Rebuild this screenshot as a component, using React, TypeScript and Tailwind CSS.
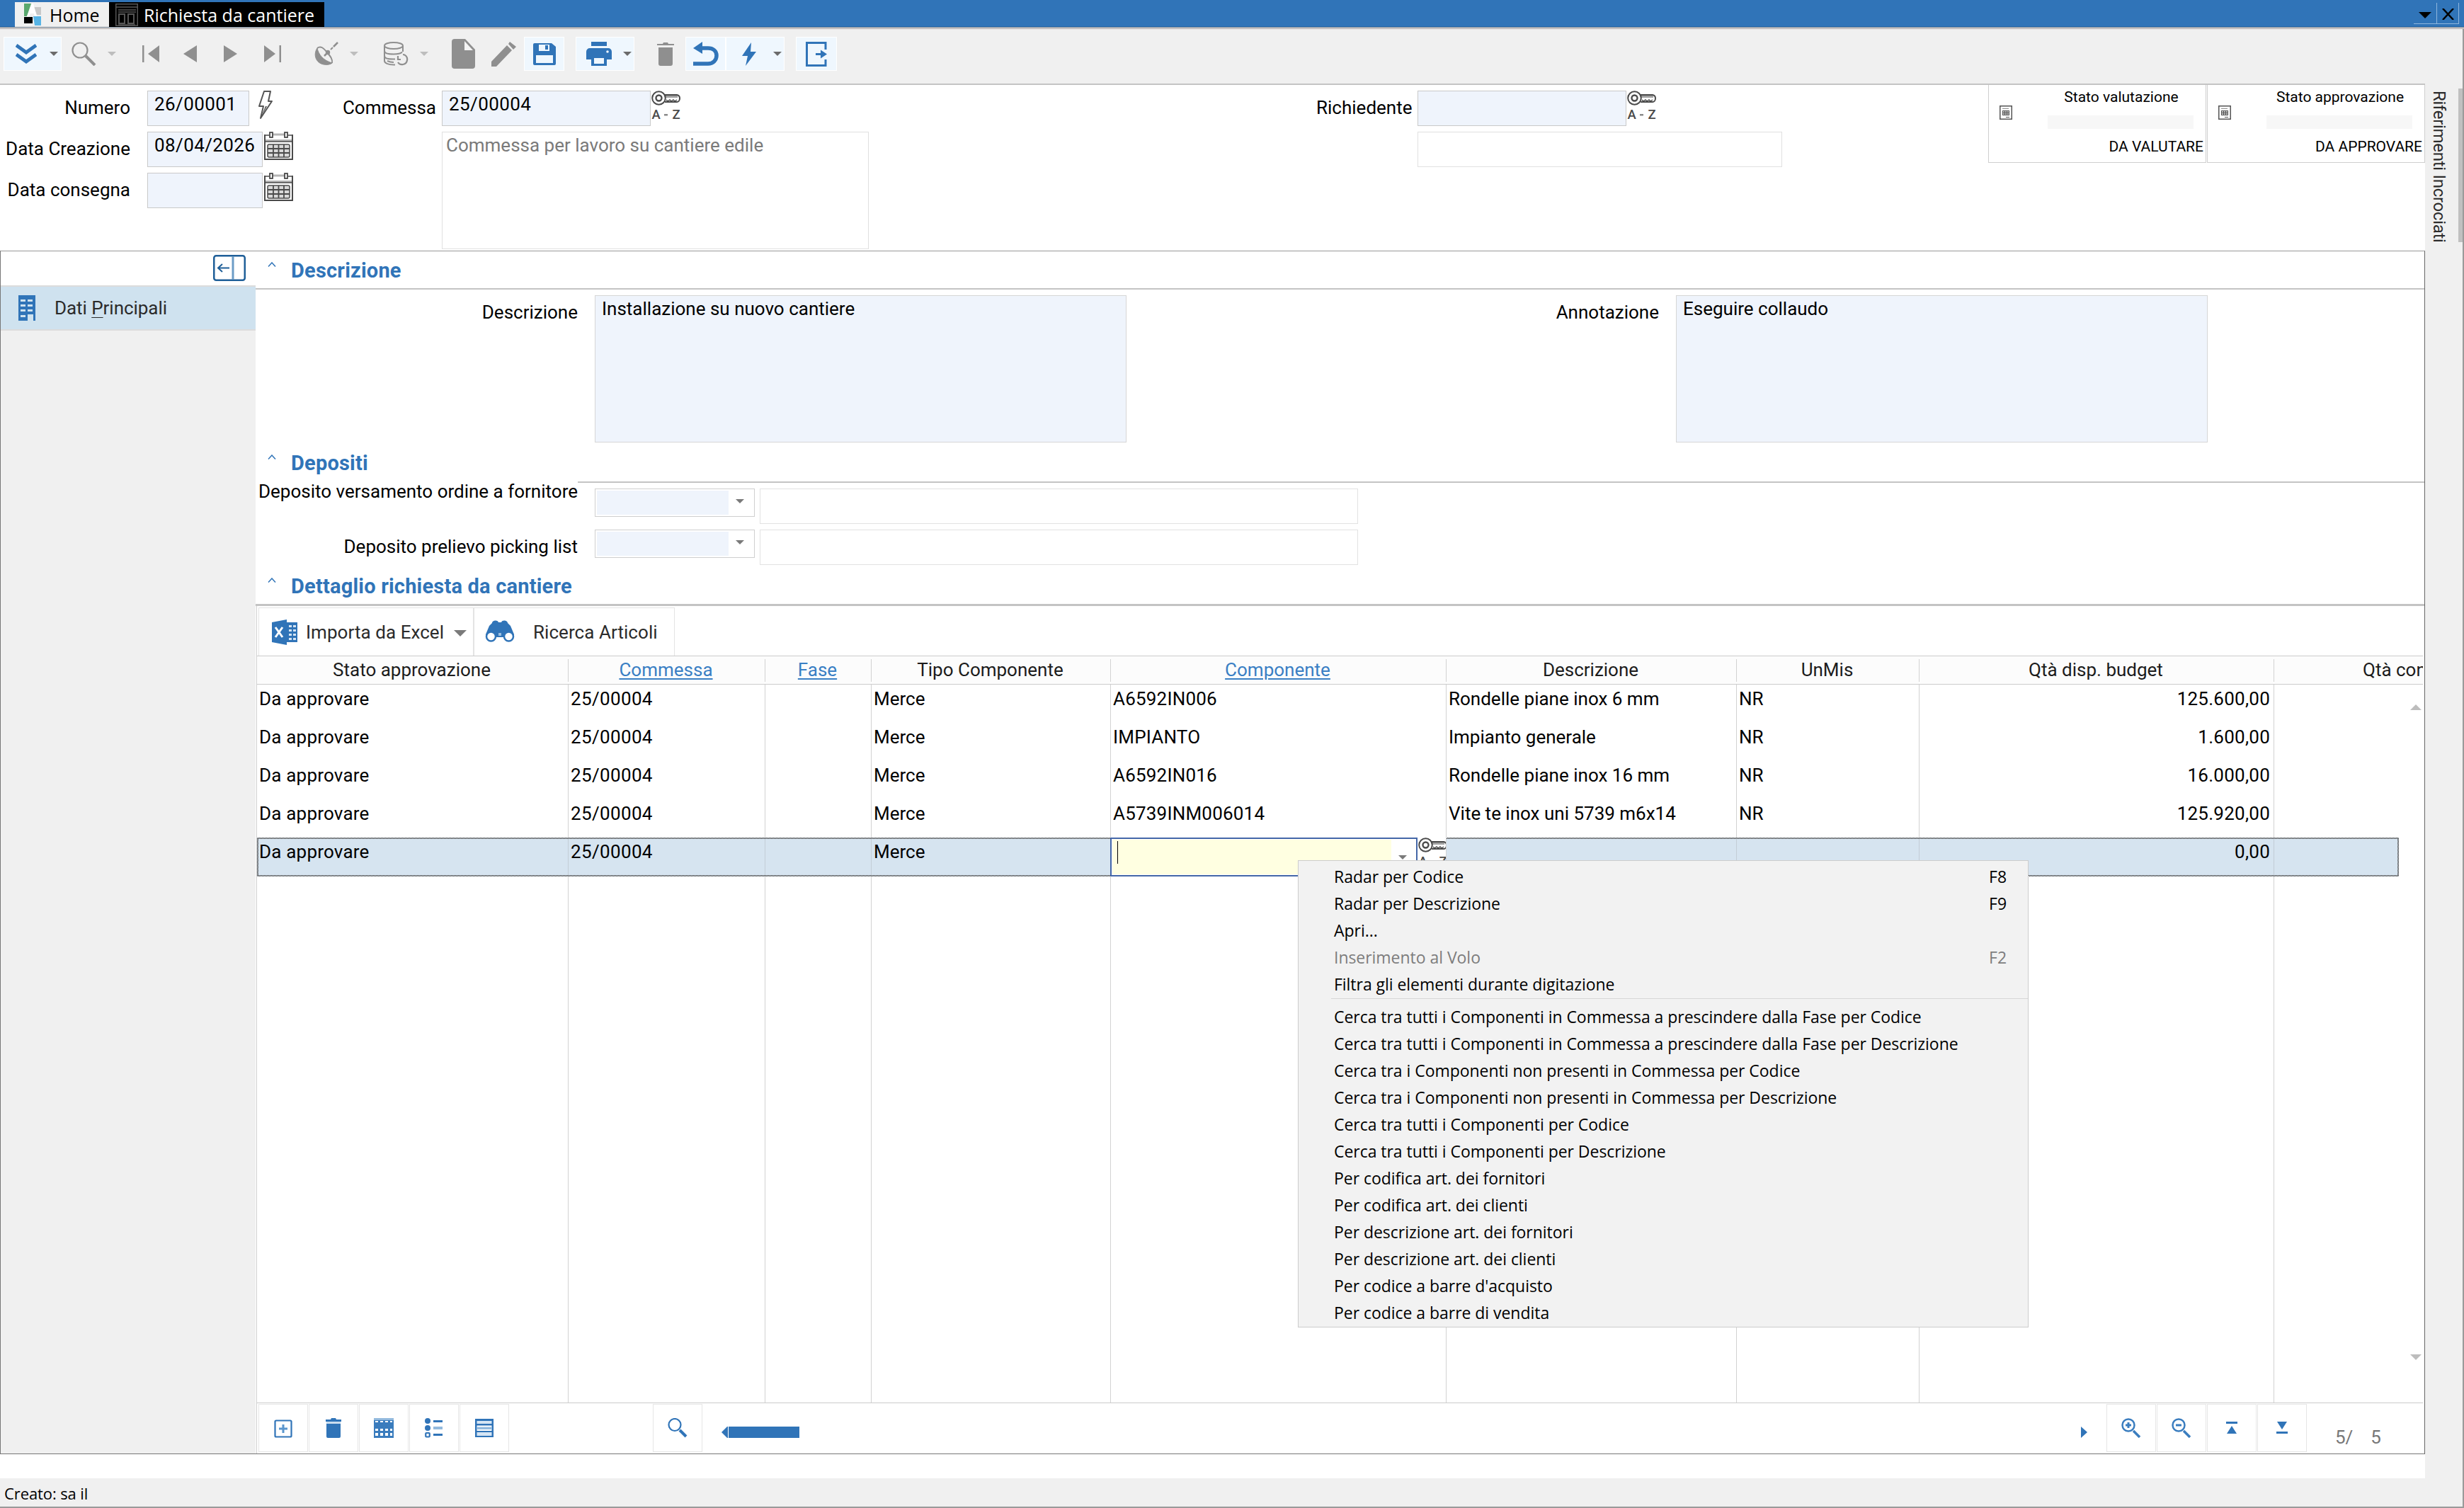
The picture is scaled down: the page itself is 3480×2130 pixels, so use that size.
import type { ReactNode } from "react";
import clsx from "clsx";

interface Column {
  label: string;
  link?: boolean;
}

interface Row {
  commessa: string;
  tipo: string;
  componente: string;
  descrizione: string;
  um: string;
  qta: string;
}

interface MenuItem {
  label: string;
  shortcut?: string;
  disabled?: boolean;
}

const columns: Column[] = [
  { label: "Stato approvazione" },
  { label: "Commessa", link: true },
  { label: "Fase", link: true },
  { label: "Tipo Componente" },
  { label: "Componente", link: true },
  { label: "Descrizione" },
  { label: "UnMis" },
  { label: "Qtà disp. budget" },
];

const rows: Row[] = [
  { commessa: "25/00004", tipo: "Merce", componente: "A6592IN006", descrizione: "Rondelle piane inox 6 mm", um: "NR", qta: "125.600,00" },
  { commessa: "25/00004", tipo: "Merce", componente: "IMPIANTO", descrizione: "Impianto generale", um: "NR", qta: "1.600,00" },
  { commessa: "25/00004", tipo: "Merce", componente: "A6592IN016", descrizione: "Rondelle piane inox 16 mm", um: "NR", qta: "16.000,00" },
  { commessa: "25/00004", tipo: "Merce", componente: "A5739INM006014", descrizione: "Vite te inox uni 5739 m6x14", um: "NR", qta: "125.920,00" },
];

const menuTop: MenuItem[] = [
  { label: "Radar per Codice", shortcut: "F8" },
  { label: "Radar per Descrizione", shortcut: "F9" },
  { label: "Apri..." },
  { label: "Inserimento al Volo", shortcut: "F2", disabled: true },
  { label: "Filtra gli elementi durante digitazione" },
];

const menuBottom: MenuItem[] = [
  { label: "Cerca tra tutti i Componenti in Commessa a prescindere dalla Fase per Codice" },
  { label: "Cerca tra tutti i Componenti in Commessa a prescindere dalla Fase per Descrizione" },
  { label: "Cerca tra i Componenti non presenti in Commessa per Codice" },
  { label: "Cerca tra i Componenti non presenti in Commessa per Descrizione" },
  { label: "Cerca tra tutti i Componenti per Codice" },
  { label: "Cerca tra tutti i Componenti per Descrizione" },
  { label: "Per codifica art. dei fornitori" },
  { label: "Per codifica art. dei clienti" },
  { label: "Per descrizione art. dei fornitori" },
  { label: "Per descrizione art. dei clienti" },
  { label: "Per codice a barre d'acquisto" },
  { label: "Per codice a barre di vendita" },
];

const gridCols = "grid grid-cols-[440px_278px_150px_338px_474px_410px_258px_501px_1fr]";

/* ---------- Icons ---------- */

function Caret({ className }: { className?: string }) {
  return (
    <svg viewBox="0 0 12 6" className={clsx("w-3 h-1.5 shrink-0 fill-current", className)}>
      <path d="M0 0h12L6 6z" />
    </svg>
  );
}

function KeyIcon({ className }: { className?: string }) {
  return (
    <svg viewBox="0 0 42 41" className={clsx("w-[42px] h-[41px] shrink-0 overflow-visible", className)} fill="none" stroke="#4a4a4a" strokeWidth="2">
      <path d="M18 6h18a5 5 0 0 1 4 5c0 3-2 5-4 5H19" />
      <path d="M20 7h17v3H20z" fill="#a0a0a0" stroke="none" />
      <path d="M21 13l2 2 3-2 2 2 3-2 2 2 3-2" strokeWidth="1.5" />
      <circle cx="10.5" cy="10.5" r="9.3" fill="#fff" />
      <circle cx="10.5" cy="10.5" r="4" strokeWidth="2.4" />
      <text x="0.5" y="40" fontSize="18.5" fontFamily="Roboto" fontWeight="500" fill="#4a4a4a" stroke="none">A</text>
      <rect x="18" y="33" width="5" height="2.5" fill="#8a8a8a" stroke="none" />
      <text x="29.5" y="40" fontSize="18.5" fontFamily="Roboto" fontWeight="500" fill="#4a4a4a" stroke="none">Z</text>
    </svg>
  );
}

function CalendarIcon() {
  return (
    <svg viewBox="0 0 41 41" className="w-[41px] h-[41px] shrink-0 ml-0.5" fill="none" stroke="#4a4a4a">
      <path d="M1 4v35h39V4" strokeWidth="2" />
      <path d="M2 11h37v3H2z" fill="#b5b5b5" stroke="none" />
      <path d="M12 4h17" stroke="#b5b5b5" strokeWidth="3" />
      <path d="M1 5h6M34 5h6M1 14h39" strokeWidth="1.5" />
      <rect x="8" y="1" width="4" height="7" strokeWidth="1.8" />
      <rect x="29" y="1" width="4" height="7" strokeWidth="1.8" />
      <rect x="5" y="18" width="31" height="18" rx="2" fill="#d8d8d8" strokeWidth="1.5" />
      <path d="M13 18v18M20.5 18v18M28 18v18M5 24h31M5 30h31" strokeWidth="1.8" />
    </svg>
  );
}

function MiniDocIcon() {
  return (
    <svg viewBox="0 0 18 20" className="w-[18px] h-5 shrink-0" fill="none" stroke="#555">
      <rect x="0.75" y="0.75" width="16.5" height="18.5" strokeWidth="1.5" />
      <path d="M4 4.5h9" stroke="#888" />
      <rect x="4.5" y="7.5" width="9" height="6" fill="#c4c4c4" />
      <path d="M4.500 10.500h9M7.500 7.500v6M10.500 7.500v6M9 16.500h5" />
    </svg>
  );
}

function ZoomIcon({ sign }: { sign: "+" | "-" }) {
  return (
    <svg viewBox="0 0 28 28" className="w-7 h-7 mt-[19px]" fill="none" stroke="#3a7dbf">
      <circle cx="10" cy="10" r="8.5" strokeWidth="2.5" />
      <path d="M17 18l9 9" strokeWidth="3.5" />
      <path d={sign === "+" ? "M6 10h8M10 6v8" : "M6 10h8"} strokeWidth="3" />
    </svg>
  );
}

/* ---------- Small building blocks ---------- */

function ToolButton({ className, children }: { className?: string; children: ReactNode }) {
  return (
    <div className={clsx("h-[48px] flex items-center shrink-0 bg-[#eff7fe] border border-white text-[#6b6b6b]", className)}>
      {children}
    </div>
  );
}

function Label({ className, children }: { className?: string; children: ReactNode }) {
  return <div className={clsx("text-right pt-[9px] whitespace-nowrap shrink-0", className)}>{children}</div>;
}

function Field({ className, children }: { className?: string; children?: ReactNode }) {
  return (
    <div className={clsx("h-[50px] pt-[3px] border border-[#c9c9c9] bg-[#eff4fc] tracking-[0.4px] whitespace-nowrap shrink-0", className)}>
      {children}
    </div>
  );
}

function Combo() {
  return (
    <div className="w-[226px] h-10 ml-6 p-[2px] flex items-center border border-[#cfcfcf] bg-white shrink-0">
      <div className="w-[186px] h-full bg-[#eff4fc]" />
      <Caret className="ml-[10px] -mt-1 text-[#7a7a7a]" />
    </div>
  );
}

function SectionHeader({ title, className }: { title: string; className?: string }) {
  return (
    <div className={clsx("flex items-start border-[#c4c4c4] pl-[17px] shrink-0", className)}>
      <svg viewBox="0 0 12 7" className="w-3 h-[7px] mt-[15px]" fill="none" stroke="#3074b8" strokeWidth="1.5">
        <path d="M1 6.5L6 1l5 5.5" />
      </svg>
      <h2 className="ml-[21px] mt-[11px] text-[29px] leading-8 tracking-[0.2px] font-bold text-[#3074b8]">{title}</h2>
    </div>
  );
}

function StatusBox({ title, value }: { title: string; value: string }) {
  return (
    <div className="w-[308px] h-[110px] flex border border-t-0 border-[#cfcfcf] text-[21px] leading-6 shrink-0">
      <div className="pl-[15px] pt-[29px]">
        <MiniDocIcon />
      </div>
      <div className="flex-1 flex flex-col">
        <div className="pl-[35px] pt-[5px] text-center">{title}</div>
        <div className="ml-[50px] mt-[14px] w-[206px] h-[19px] bg-[#f7f7f7]" />
        <div className="mt-[12px] pr-[3px] text-right leading-[26px]">{value}</div>
      </div>
    </div>
  );
}

function GridButton({ className, children }: { className?: string; children: ReactNode }) {
  return (
    <div className={clsx("w-[70px] h-[68px] mr-px flex justify-center items-start border border-[#e6e6e6] bg-white shrink-0", className)}>
      {children}
    </div>
  );
}

function MenuRow({ item }: { item: MenuItem }) {
  return (
    <div className={clsx("h-[38px] flex items-center justify-between pl-[50px] pr-[30px] whitespace-nowrap", item.disabled ? "text-[#7d7d7d]" : "text-black")}>
      <span>{item.label}</span>
      <span>{item.shortcut}</span>
    </div>
  );
}

/* ---------- Page sections ---------- */

function TitleBar() {
  return (
    <div className="h-[38px] flex items-end bg-[#3074b8] pl-[21px] font-['Open_Sans',sans-serif] text-[25px] leading-9 shrink-0">
      <div className="w-[133px] h-[35px] flex bg-[#f0f0f0] text-black">
        <svg viewBox="0 0 24 32" className="w-6 h-8 ml-[13px] mt-[2px]">
          <path d="M0 0h10L4 18H0z" fill="#5aa86e" />
          <path d="M14 5h10v11h-6z" fill="#c8c8c8" />
          <path d="M11 0h2l5 18h-3l-1-4H9l-2 4H4z" fill="#fff" />
          <path d="M0 19h12v9H0z" fill="#000" />
          <path d="M13 18h11v13H15z" fill="#58b4e5" />
        </svg>
        <span className="ml-3">Home</span>
      </div>
      <div className="w-[304px] h-[36px] -mb-px flex bg-black text-white">
        <svg viewBox="0 0 32 32" className="w-8 h-8 ml-[9px] mt-[2px]" fill="none" stroke="#555" strokeWidth="1.5">
          <rect x="0.75" y="0.75" width="30.5" height="30.5" />
          <path d="M1 5h30M4 9h25M4 12h25" />
          <path d="M5 15h8v13H5zM18 15h8v13h-8z" strokeWidth="2" />
          <path d="M4 30h24" />
        </svg>
        <span className="ml-2">Richiesta da cantiere</span>
      </div>
      <div className="ml-auto mb-1 mr-[7px] h-[30px] flex text-black">
        <div className="w-8 border-b border-[#8fb6dd] flex justify-center">
          <svg viewBox="0 0 18 9" className="w-[18px] h-[9px] mt-[13px]">
            <path d="M0 0h18L9 9z" />
          </svg>
        </div>
        <div className="w-8 border-b border-x border-[#8fb6dd] flex justify-center">
          <svg viewBox="0 0 19 16" className="w-[19px] h-4 mt-2" fill="none" stroke="#000" strokeWidth="2.5">
            <path d="M2 0l15 16M17 0L2 16" />
          </svg>
        </div>
      </div>
    </div>
  );
}

function Toolbar() {
  return (
    <div className="h-[77px] pl-[5px] pt-[11px] flex items-start bg-[#f0f0f0] shrink-0">
      <div className="h-[48px] flex items-center text-[#bdbdbd]">
        <ToolButton className="w-[82px]">
          <svg viewBox="0 0 30 29" className="w-[30px] h-[29px] ml-4" fill="none" stroke="#3074b8" strokeWidth="5">
            <path d="M1 2l14 10L29 2M1 15l14 10 14-10" />
          </svg>
          <Caret className="ml-[18px]" />
        </ToolButton>
        <svg viewBox="0 0 35 34" className="w-[35px] h-[34px] ml-[14px]" fill="none" stroke="#8f8f8f">
          <circle cx="12" cy="12" r="10.5" strokeWidth="2.2" />
          <path d="M20 20l13 13" strokeWidth="4" />
        </svg>
        <Caret className="ml-4" />
        <svg viewBox="0 0 24 24" className="w-6 h-6 ml-[37px] fill-[#8f8f8f]">
          <path d="M0 0h2.500v24H0zM24 0v24L8 12z" />
        </svg>
        <svg viewBox="0 0 19 24" className="w-[19px] h-6 ml-[34px] fill-[#8f8f8f]">
          <path d="M19 0v24L0 12z" />
        </svg>
        <svg viewBox="0 0 19 24" className="w-[19px] h-6 ml-[38px] fill-[#8f8f8f]">
          <path d="M0 0v24l19-12z" />
        </svg>
        <svg viewBox="0 0 24 24" className="w-6 h-6 ml-[38px] fill-[#8f8f8f]">
          <path d="M21.500 0H24v24h-2.500zM0 0v24l16-12z" />
        </svg>
        {/* Satellite dish */}
        <svg viewBox="0 0 34 34" className="w-[34px] h-[34px] ml-[47px]" fill="none" stroke="#8f8f8f">
          <path d="M4 9C-2 18 2 30 13 32c5 1 10 0 12-2C12 26 6 18 4 9z" fill="#8f8f8f" />
          <path d="M4 9c5-4 9 0 14 6s8 10 7 15" strokeWidth="2" />
          <path d="M14 20l5-5M27 7l6-6" strokeWidth="2.5" />
          <circle cx="19" cy="15" r="3.2" fill="#8f8f8f" stroke="none" />
          <path d="M23 11l3-3" strokeWidth="2" />
        </svg>
        <Caret className="ml-4" />
        {/* Database refresh */}
        <svg viewBox="0 0 35 34" className="w-[35px] h-[34px] ml-9" fill="none" stroke="#8f8f8f" strokeWidth="2">
          <ellipse cx="14" cy="5.5" rx="13" ry="4.5" />
          <path d="M1 6v21c0 3 5 5.500 13 5.500h2M27 6v8M1 13c0 3 6 4.500 13 4.500 5 0 10-1 12-3M1 20c0 3 5 4.500 12 4.500h3M5 27c3 1.500 6 2 9 2" />
          <path d="M20 20v5h4M20 29c3 5 12 4 13-3 1-5-3-8-6-8" strokeWidth="2.2" />
        </svg>
        <Caret className="ml-4" />
        <svg viewBox="0 0 33 42" className="w-[33px] h-[42px] ml-[33px]">
          <path d="M4 0h15l14 15v23a4 4 0 0 1-4 4H4a4 4 0 0 1-4-4V4a4 4 0 0 1 4-4z" fill="#8f8f8f" />
          <path d="M18 3l12 13H18z" fill="#f4f4f4" />
        </svg>
        <svg viewBox="0 0 35 35" className="w-[35px] h-[35px] ml-[23px] fill-[#8f8f8f]">
          <path d="M0 28L22 5l7 7L7 35H0zM24 3l2-3 9 7-4 4z" />
        </svg>
        <ToolButton className="w-[57px] ml-[11px] justify-center">
          <svg viewBox="0 0 32 31" className="w-8 h-[31px]">
            <path d="M2 0h24l6 5v24a2 2 0 0 1-2 2H2a2 2 0 0 1-2-2V2a2 2 0 0 1 2-2z" fill="#3074b8" />
            <path d="M8 2h15v9H8zM4 17h24v11H4z" fill="#eff7fe" />
            <path d="M17 3h4v6h-4z" fill="#3074b8" />
          </svg>
        </ToolButton>
        <ToolButton className="w-[83px] ml-4">
          <svg viewBox="0 0 36 34" className="w-9 h-[34px] ml-[14px]">
            <path d="M7 0h22v6H7zM5 9h26a5 5 0 0 1 5 5v11h-7v9H7v-9H0V14a5 5 0 0 1 5-5z" fill="#3074b8" />
            <path d="M11 23h14v8H11z" fill="#eff7fe" />
            <circle cx="30" cy="14" r="1.8" fill="#eff7fe" />
          </svg>
          <Caret className="ml-4" />
        </ToolButton>
        <svg viewBox="0 0 24 33" className="w-6 h-[33px] ml-[32px] fill-[#8f8f8f]">
          <path d="M0 2h8l1-2h6l1 2h8v2H0zM2 7h20v23a3 3 0 0 1-3 3H5a3 3 0 0 1-3-3z" />
        </svg>
        <ToolButton className="w-[57px] ml-4 justify-center">
          <svg viewBox="0 0 36 34" className="w-9 h-[34px]" fill="none" stroke="#3074b8">
            <path d="M9 9h12c7 0 12 4 12 10.500S28 31 21 31H0" strokeWidth="5.5" />
            <path d="M13 0v17L0 9z" fill="#3074b8" stroke="none" />
          </svg>
        </ToolButton>
        <ToolButton className="w-[83px]">
          <svg viewBox="0 0 20 33" className="w-5 h-[33px] ml-[22px] fill-[#3074b8]">
            <path d="M13 0L0 19h8L5 33l15-20h-8z" />
          </svg>
          <Caret className="ml-6" />
        </ToolButton>
        <ToolButton className="w-[58px] ml-4 justify-center">
          <svg viewBox="0 0 31 35" className="w-[31px] h-[35px]" fill="none" stroke="#3074b8" strokeWidth="3">
            <path d="M28 11V1.500H1.500v32H28V25" />
            <path d="M14 17.500h9" />
            <path d="M21 11.500l9 6-9 6z" fill="#3074b8" stroke="none" />
          </svg>
        </ToolButton>
      </div>
    </div>
  );
}

function FormHeader() {
  return (
    <div className="h-[236px] flex border-t-2 border-[#c4c4c4] bg-white shrink-0">
      <div className="w-[414px] pt-2 flex flex-col gap-2">
        <div className="flex">
          <Label className="w-[184px]">Numero</Label>
          <Field className="w-[144px] ml-6 pl-[9px]">26/00001</Field>
          <svg viewBox="0 0 20 41" className="w-5 h-[41px] ml-[13px]" fill="#fff" stroke="#555" strokeWidth="2" strokeLinejoin="round">
            <path d="M8 1h9l-3 14h5L3 39l4-17H1z" />
            <path d="M10 22l-7 17 9-17z" fill="#555" stroke="none" />
          </svg>
        </div>
        <div className="flex">
          <Label className="w-[184px]">Data Creazione</Label>
          <Field className="w-[163px] ml-6 pl-[9px]">08/04/2026</Field>
          <CalendarIcon />
        </div>
        <div className="flex">
          <Label className="w-[184px]">Data consegna</Label>
          <Field className="w-[163px] ml-6" />
          <CalendarIcon />
        </div>
      </div>

      <div className="w-[1445px] pt-2 flex flex-col gap-2">
        <div className="flex">
          <Label className="w-[202px]">Commessa</Label>
          <Field className="w-[295px] ml-2 pl-[9px]">25/00004</Field>
          <KeyIcon className="ml-px" />
        </div>
        <div className="w-[603px] h-[166px] ml-[210px] pl-[5px] pt-[3px] border border-[#e0e0e0] text-[#7a7a7a]">
          Commessa per lavoro su cantiere edile
        </div>
      </div>

      <div className="pt-2 flex flex-col gap-2">
        <div className="flex">
          <Label className="w-[135px]">Richiedente</Label>
          <Field className="w-[295px] ml-2" />
          <KeyIcon className="ml-px" />
        </div>
        <div className="w-[515px] h-[50px] ml-[143px] border border-[#e0e0e0]" />
      </div>

      <div className="ml-auto flex gap-px">
        <StatusBox title="Stato valutazione" value="DA VALUTARE" />
        <StatusBox title="Stato approvazione" value="DA APPROVARE" />
      </div>
    </div>
  );
}

function Sidebar() {
  return (
    <div className="w-[360px] bg-[#f0f0f0] flex flex-col shrink-0">
      <div className="h-[48px] bg-white flex justify-end items-start pr-[14px] pt-[5px]">
        <svg viewBox="0 0 46 37" className="w-[46px] h-[37px]" fill="none" stroke="#1f5f98" strokeWidth="2.5">
          <rect x="1.25" y="1.25" width="43.5" height="34.5" rx="3" />
          <path d="M28 2v33" stroke="#6c9cc6" strokeWidth="3" />
          <path d="M7 18.500h16M13 13l-6 5.500 6 5.500" strokeWidth="2" />
        </svg>
      </div>
      <div className="h-[64px] flex items-center bg-[#cfe2ef] border-y-2 border-[#dcdcdc]">
        <svg viewBox="0 0 24 36" className="w-6 h-9 ml-[25px]">
          <path d="M0 0h24v36h-3v-9h-8v9H0z" fill="#3074b8" />
          <path d="M3 6h7v3H3zM13 6h7v3h-7zM3 13h7v3H3zM13 13h7v3h-7zM3 20h7v3H3zM13 20h7v3h-7zM3 28h7v3H3z" fill="#cfe2ef" />
        </svg>
        <span className="ml-[27px] text-[#2b2b2b] tracking-[-0.05px]">
          Dati <span className="underline decoration-1 underline-offset-4">P</span>rincipali
        </span>
      </div>
    </div>
  );
}

function DetailGrid() {
  const cell = "border-r border-[#d2d2d2] pl-[3px] whitespace-nowrap overflow-hidden";

  return (
    <div className="flex-1 flex flex-col ml-px border-l border-[#cfcfcf] min-h-0">
      {/* Grid toolbar */}
      <div className="h-[70px] flex items-start pt-0.5 pl-0.5 text-[#2b2b2b] shrink-0">
        <div className="w-[304px] h-[68px] flex items-center border border-b-0 border-[#e4e4e4]">
          <svg viewBox="0 0 36 36" className="w-9 h-9 ml-[18px]">
            <path d="M21 4h15v28H21z" fill="#3074b8" />
            <path d="M24 8h4v3h-4zM30 8h4v3h-4zM24 14h4v3h-4zM30 14h4v3h-4zM24 20h4v3h-4zM30 20h4v3h-4zM24 26h4v3h-4zM30 26h4v3h-4z" fill="#d5e5f4" />
            <path d="M0 4l21-4v36L0 32z" fill="#3074b8" />
            <path d="M5 11l10 14M15 11L5 25" stroke="#fff" strokeWidth="3" />
          </svg>
          <span className="ml-3 mt-px tracking-[0.05px]">Importa da Excel</span>
          <svg viewBox="0 0 18 9" className="w-[18px] h-[9px] ml-[14px] mt-1 fill-[#7a7a7a]">
            <path d="M0 0h18L9 9z" />
          </svg>
        </div>
        <div className="w-[284px] h-[68px] flex items-center border border-b-0 border-[#e4e4e4]">
          <svg viewBox="0 0 42 31" className="w-[42px] h-[31px] ml-[15px] -mt-0.5">
            <path d="M10 4c0-4 8-5 9-1h4c1-4 9-3 9 1l4 4 5 12v4H1v-4L6 8z" fill="#3074b8" />
            <circle cx="8.5" cy="23" r="6.5" fill="#fff" stroke="#3074b8" strokeWidth="2.5" />
            <circle cx="33.5" cy="23" r="6.5" fill="#fff" stroke="#3074b8" strokeWidth="2.5" />
            <path d="M17 24h8v7h-8z" fill="#fff" />
            <path d="M19 18h4v4h-4z" fill="#9cc0e2" />
          </svg>
          <span className="ml-[26px] mt-px tracking-[0.05px]">Ricerca Articoli</span>
        </div>
      </div>

      {/* Column headers */}
      <div className={clsx(gridCols, "h-[41px] border-y border-[#cccccc] bg-[#fcfcfc] mr-0.5 text-[#1c1c1c] shrink-0")}>
        {columns.map((col) => (
          <div key={col.label} className="h-8 mt-1 pr-0.5 border-r border-[#d2d2d2] text-center">
            <span className={clsx(col.link && "text-[#3a7fc4] underline decoration-2 underline-offset-[3px]")}>{col.label}</span>
          </div>
        ))}
        <div className="h-8 mt-1 pl-[125px] whitespace-nowrap overflow-hidden">Qtà con</div>
      </div>

      {/* Rows, with the scroll arrows over the right edge */}
      <div className="relative flex-1 flex flex-col mr-0.5 min-h-0">
        {rows.map((row) => (
          <div key={row.componente} className={clsx(gridCols, "h-[54px] leading-10 shrink-0")}>
            <div className={clsx(cell, "tracking-[0.2px]")}>Da approvare</div>
            <div className={clsx(cell, "tracking-[0.35px]")}>{row.commessa}</div>
            <div className={cell} />
            <div className={cell}>{row.tipo}</div>
            <div className={clsx(cell, "tracking-[0.2px]")}>{row.componente}</div>
            <div className={cell}>{row.descrizione}</div>
            <div className={cell}>{row.um}</div>
            <div className={clsx(cell, "text-right pr-[5px] tracking-[0.25px]")}>{row.qta}</div>
          </div>
        ))}

        <div className="w-[3025px] h-[55px] p-[2px] bg-[repeating-conic-gradient(#3c3c3c_0_25%,#c8d0d8_0_50%)] bg-[length:2px_2px] shrink-0">
          <div className="h-full grid grid-cols-[438px_278px_150px_338px_474px_410px_258px_501px_1fr] leading-9 bg-[#d6e4f0]">
            <div className="border-r border-[#c3cdd6] pl-px tracking-[0.2px]">Da approvare</div>
            <div className="border-r border-[#c3cdd6] pl-[3px] tracking-[0.35px]">25/00004</div>
            <div className="border-r border-[#c3cdd6]" />
            <div className="pl-[3px]">Merce</div>
            <div className="-my-0.5 -ml-px flex bg-white border-r border-[#d2d2d2]">
              <div className="w-[434px] flex border-2 border-[#4467a8] p-px">
                <div className="w-[394px] pl-[7px] pt-0.5 bg-[#ffffe1]">
                  <div className="w-px h-8 bg-black" />
                </div>
                <Caret className="ml-[10px] mt-[22px] text-[#7a7a7a]" />
              </div>
              <div className="flex-1 overflow-hidden">
                <KeyIcon className="ml-px" />
              </div>
            </div>
            <div className="border-r border-[#c3cdd6]" />
            <div className="border-r border-[#c3cdd6]" />
            <div className="border-r border-[#c3cdd6] pr-[5px] text-right tracking-[0.25px]">0,00</div>
          </div>
        </div>

        <div className={clsx(gridCols, "flex-1")}>
          {columns.map((col) => (
            <div key={col.label} className="border-r border-[#d2d2d2]" />
          ))}
        </div>

        <svg viewBox="0 0 16 8" className="absolute right-0.5 top-[28px] w-4 h-2 fill-[#bdbdbd]">
          <path d="M0 8h16L8 0z" />
        </svg>
        <svg viewBox="0 0 16 8" className="absolute right-0.5 bottom-[60px] w-4 h-2 fill-[#bdbdbd]">
          <path d="M0 0h16L8 8z" />
        </svg>
      </div>

      {/* Footer bar */}
      <div className="h-[72px] flex items-start border-t border-[#cccccc] pt-px pl-0.5 mr-0.5 shrink-0">
        <GridButton>
          <svg viewBox="0 0 26 26" className="w-[26px] h-[26px] mt-[21px]" fill="none" stroke="#3074b8">
            <rect x="1.5" y="1.5" width="23" height="23" rx="1.5" strokeWidth="2.2" />
            <path d="M7 13h12M13 7v12" stroke="#5b96cd" strokeWidth="3" />
          </svg>
        </GridButton>
        <GridButton>
          <svg viewBox="0 0 22 28" className="w-[22px] h-7 mt-[19px] fill-[#3074b8]">
            <path d="M0 2h7l1-2h6l1 2h7v3H0zM1 8h20v18a2 2 0 0 1-2 2H3a2 2 0 0 1-2-2z" />
            <path d="M1 5h20v3H1z" fill="#c9dcee" />
          </svg>
        </GridButton>
        <GridButton>
          <svg viewBox="0 0 28 28" className="w-7 h-7 mt-[19px]">
            <path d="M0 0h28v28H0z" fill="#3a7cbd" />
            <path d="M0 0h28v3H0z" fill="#93bade" />
            <path d="M2 4h4v2H2zM9 4h4v2H9zM16 4h4v2h-4zM23 4h3v2h-3zM2 15h4v3H2zM9 15h4v3H9zM16 15h4v3h-4zM23 15h3v3h-3zM2 21h4v4H2zM9 21h4v4H9zM16 21h4v4h-4zM23 21h3v4h-3z" fill="#fff" />
          </svg>
        </GridButton>
        <GridButton>
          <svg viewBox="0 0 26 28" className="w-[26px] h-7 mt-[19px]" fill="#3074b8">
            <circle cx="4" cy="4" r="4" />
            <circle cx="4" cy="14" r="4" />
            <rect x="1.25" y="21" width="5.5" height="5.5" rx="1" fill="none" stroke="#3074b8" strokeWidth="2.2" />
            <path d="M12 3h13v3H12zM12 22h13v3H12z" />
            <path d="M12 12h13v4H12z" fill="#93bade" />
          </svg>
        </GridButton>
        <GridButton>
          <svg viewBox="0 0 26 26" className="w-[26px] h-[26px] mt-5">
            <path d="M0 0h26v26H0z" fill="#3074b8" />
            <path d="M2.500 3h21v4h-21zM2.500 19h21v5h-21z" fill="#d5e5f4" />
            <path d="M2.500 9.500h21v7.500h-21z" fill="#fff" />
            <path d="M2.500 11.500h21v3.500h-21z" fill="#93bade" />
          </svg>
        </GridButton>
        <GridButton className="ml-[202px]">
          <svg viewBox="0 0 28 28" className="w-7 h-7 mt-[19px]" fill="none" stroke="#3074b8">
            <circle cx="10" cy="9.5" r="8.5" strokeWidth="2.2" />
            <path d="M17 17l9 9" strokeWidth="4" />
          </svg>
        </GridButton>
        <svg viewBox="0 0 110 16" className="w-[110px] h-4 ml-[26px] mt-8 fill-[#3074b8]">
          <path d="M0 8l8-8h1v16H8zM10 0h100v16H10z" />
        </svg>

        <div className="ml-auto flex">
          <svg viewBox="0 0 9 16" className="w-[9px] h-4 mr-[27px] mt-8 fill-[#3074b8]">
            <path d="M0 0l9 8-9 8z" />
          </svg>
          <GridButton>
            <ZoomIcon sign="+" />
          </GridButton>
          <GridButton>
            <ZoomIcon sign="-" />
          </GridButton>
          <GridButton>
            <svg viewBox="0 0 16 17" className="w-4 h-[17px] mt-6 fill-[#3074b8]">
              <path d="M0 0h16v3H0zM8 6l7 11H1z" />
            </svg>
          </GridButton>
          <GridButton>
            <svg viewBox="0 0 16 17" className="w-4 h-[17px] mt-6 fill-[#3074b8]">
              <path d="M0 14h16v3H0zM1 0h14L8 11z" />
            </svg>
          </GridButton>
          <div className="w-[163px] pl-[39px] pt-8 flex gap-[25px] text-[#777]">
            <span>5/</span>
            <span>5</span>
          </div>
        </div>
      </div>
    </div>
  );
}

function MainPanel() {
  return (
    <div className="flex-1 flex flex-col min-w-0 bg-white">
      <SectionHeader title="Descrizione" className="h-[54px] border-b-2" />
      <div className="h-[218px] flex items-start pt-2 shrink-0">
        <Label className="w-[455px]">Descrizione</Label>
        <div className="w-[751px] h-[208px] ml-6 pl-[9px] pt-[3px] border border-[#d6d6d6] bg-[#eff4fc]">
          Installazione su nuovo cantiere
        </div>
        <Label className="w-[752px]">Annotazione</Label>
        <div className="w-[751px] h-[208px] ml-6 pl-[9px] pt-[3px] border border-[#d6d6d6] bg-[#eff4fc]">
          Eseguire collaudo
        </div>
      </div>

      <SectionHeader title="Depositi" className="h-[55px] border-b-2" />
      <div className="h-[119px] flex flex-col gap-2 pt-2 shrink-0">
        <div className="h-[50px] flex items-start">
          <div className="relative w-[455px] h-[30px] -mt-[11px] bg-white text-right whitespace-nowrap shrink-0">
            Deposito versamento ordine a fornitore
          </div>
          <Combo />
          <div className="w-[845px] h-[50px] ml-[7px] border border-[#e2e2e2]" />
        </div>
        <div className="h-[50px] flex items-start">
          <Label className="w-[455px]">Deposito prelievo picking list</Label>
          <Combo />
          <div className="w-[845px] h-[50px] ml-[7px] border border-[#e2e2e2]" />
        </div>
      </div>

      <SectionHeader title="Dettaglio richiesta da cantiere" className="h-[55px] border-b-3" />
      <DetailGrid />
    </div>
  );
}

function ContextMenu() {
  return (
    <div className="absolute left-[1833px] top-[1215px] w-[1032px] h-[660px] border border-[#cccccc] bg-[#f2f2f2] pt-[3px] font-['Open_Sans',sans-serif] text-[23px] tracking-[-0.04px]">
      {menuTop.map((item) => (
        <MenuRow key={item.label} item={item} />
      ))}
      <div className="h-2 ml-[46px] pt-px">
        <div className="h-px bg-[#d7d7d7]" />
      </div>
      {menuBottom.map((item) => (
        <MenuRow key={item.label} item={item} />
      ))}
    </div>
  );
}

export default function App() {
  return (
    <div className="relative w-[3480px] h-[2130px] flex flex-col overflow-hidden bg-[#f0f0f0] font-[Roboto,sans-serif] text-[26px] leading-[30px] text-black">
      <TitleBar />
      <div className="h-[3px] border-t border-b border-t-[#5d6b7a] border-b-[#a09a9a] bg-white shrink-0" />
      <div className="flex-1 flex flex-col border-r-2 border-b-2 border-[#9a9a9a] min-h-0">
        <Toolbar />
        <div className="flex-1 flex min-h-0">
          <div className="w-[3425px] flex flex-col bg-white shrink-0">
            <FormHeader />
            <div className="h-[1700px] flex border border-t-[#999999] border-l-[#777777] border-r-[#666666] border-b-[#777777] shrink-0">
              <Sidebar />
              <MainPanel />
            </div>
          </div>
          <div className="flex-1 flex justify-between pt-[7px]">
            <div className="h-[226px] pt-[3px] ml-[5px] text-2xl leading-[30px] tracking-[-0.3px] text-[#2b2b2b] whitespace-nowrap [writing-mode:vertical-rl]">
              Riferimenti Incrociati
            </div>
            <div className="w-1.5 h-[217px] bg-[#c0c0c0]" />
          </div>
        </div>
        <div className="h-10 pl-1.5 pt-[5px] font-['Open_Sans',sans-serif] text-[22px] leading-8 tracking-[-0.1px] shrink-0">Creato: sa il</div>
      </div>
      <ContextMenu />
    </div>
  );
}
